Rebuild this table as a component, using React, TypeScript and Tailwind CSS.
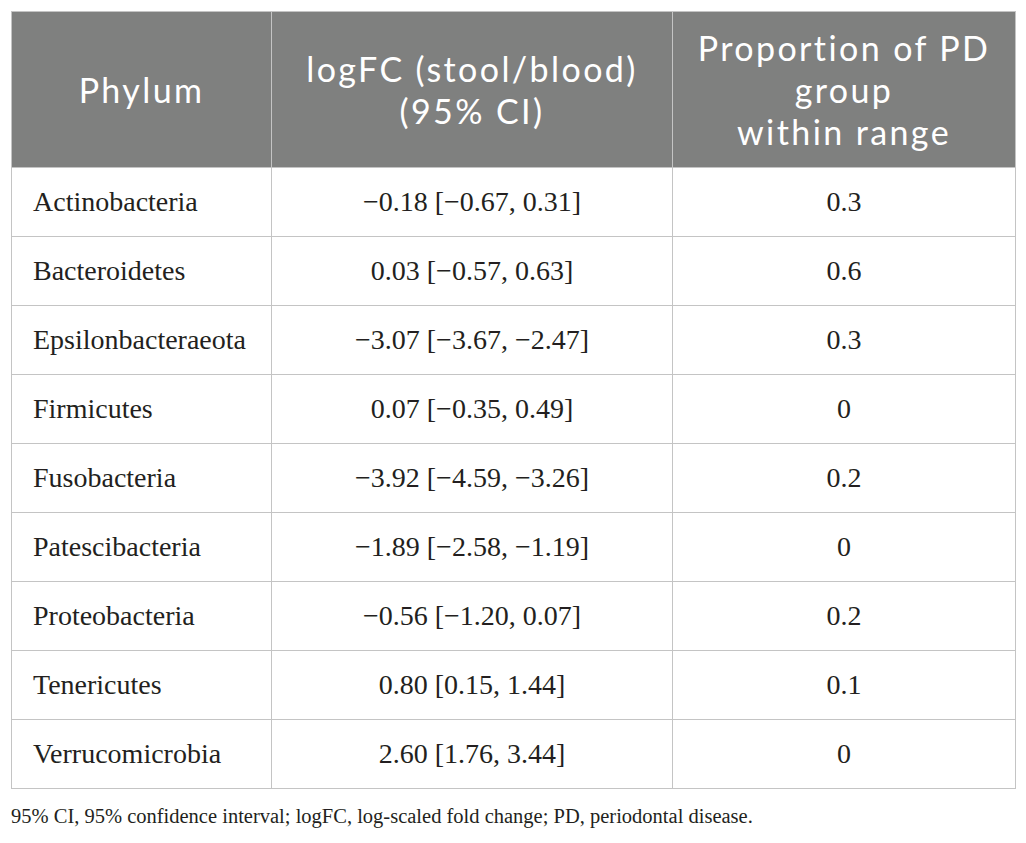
export default function App() {
  const rows = [
    { phylum: 'Actinobacteria', fc: '\u22120.18 [\u22120.67, 0.31]', prop: '0.3' },
    { phylum: 'Bacteroidetes', fc: '0.03 [\u22120.57, 0.63]', prop: '0.6' },
    { phylum: 'Epsilonbacteraeota', fc: '\u22123.07 [\u22123.67, \u22122.47]', prop: '0.3' },
    { phylum: 'Firmicutes', fc: '0.07 [\u22120.35, 0.49]', prop: '0' },
    { phylum: 'Fusobacteria', fc: '\u22123.92 [\u22124.59, \u22123.26]', prop: '0.2' },
    { phylum: 'Patescibacteria', fc: '\u22121.89 [\u22122.58, \u22121.19]', prop: '0' },
    { phylum: 'Proteobacteria', fc: '\u22120.56 [\u22121.20, 0.07]', prop: '0.2' },
    { phylum: 'Tenericutes', fc: '0.80 [0.15, 1.44]', prop: '0.1' },
    { phylum: 'Verrucomicrobia', fc: '2.60 [1.76, 3.44]', prop: '0' },
  ]

  const th = "border border-[#c4c4c4] font-normal text-center font-['Lato',sans-serif] text-[34px] leading-[42px] tracking-[2.4px]"
  const td = "border border-[#c4c4c4] font-['Liberation_Serif',serif] text-[28px]"

  return (
    <div className="min-h-screen bg-white pt-[11px] px-[11px]">
      <table className="w-[1004px] border-collapse table-fixed">
        <colgroup>
          <col className="w-[260px]" />
          <col className="w-[401px]" />
          <col className="w-[343px]" />
        </colgroup>
        <thead className="bg-[#7f807f] text-white">
          <tr className="h-[156px]">
            <th className={th}>Phylum</th>
            <th className={th}>
              logFC (stool/blood)
              <br />
              (95% CI)
            </th>
            <th className={th}>
              Proportion of PD
              <br />
              group
              <br />
              within range
            </th>
          </tr>
        </thead>
        <tbody className="text-[#231f20]">
          {rows.map((r) => (
            <tr key={r.phylum} className="h-[69px]">
              <td className={`${td} pl-[21px]`}>{r.phylum}</td>
              <td className={`${td} text-center`}>{r.fc}</td>
              <td className={`${td} text-center`}>{r.prop}</td>
            </tr>
          ))}
        </tbody>
      </table>
      <p className="mt-[12px] text-[#231f20] font-['Liberation_Serif',serif] text-[20.5px]">
        95% CI, 95% confidence interval; logFC, log-scaled fold change; PD, periodontal disease.
      </p>
    </div>
  )
}
